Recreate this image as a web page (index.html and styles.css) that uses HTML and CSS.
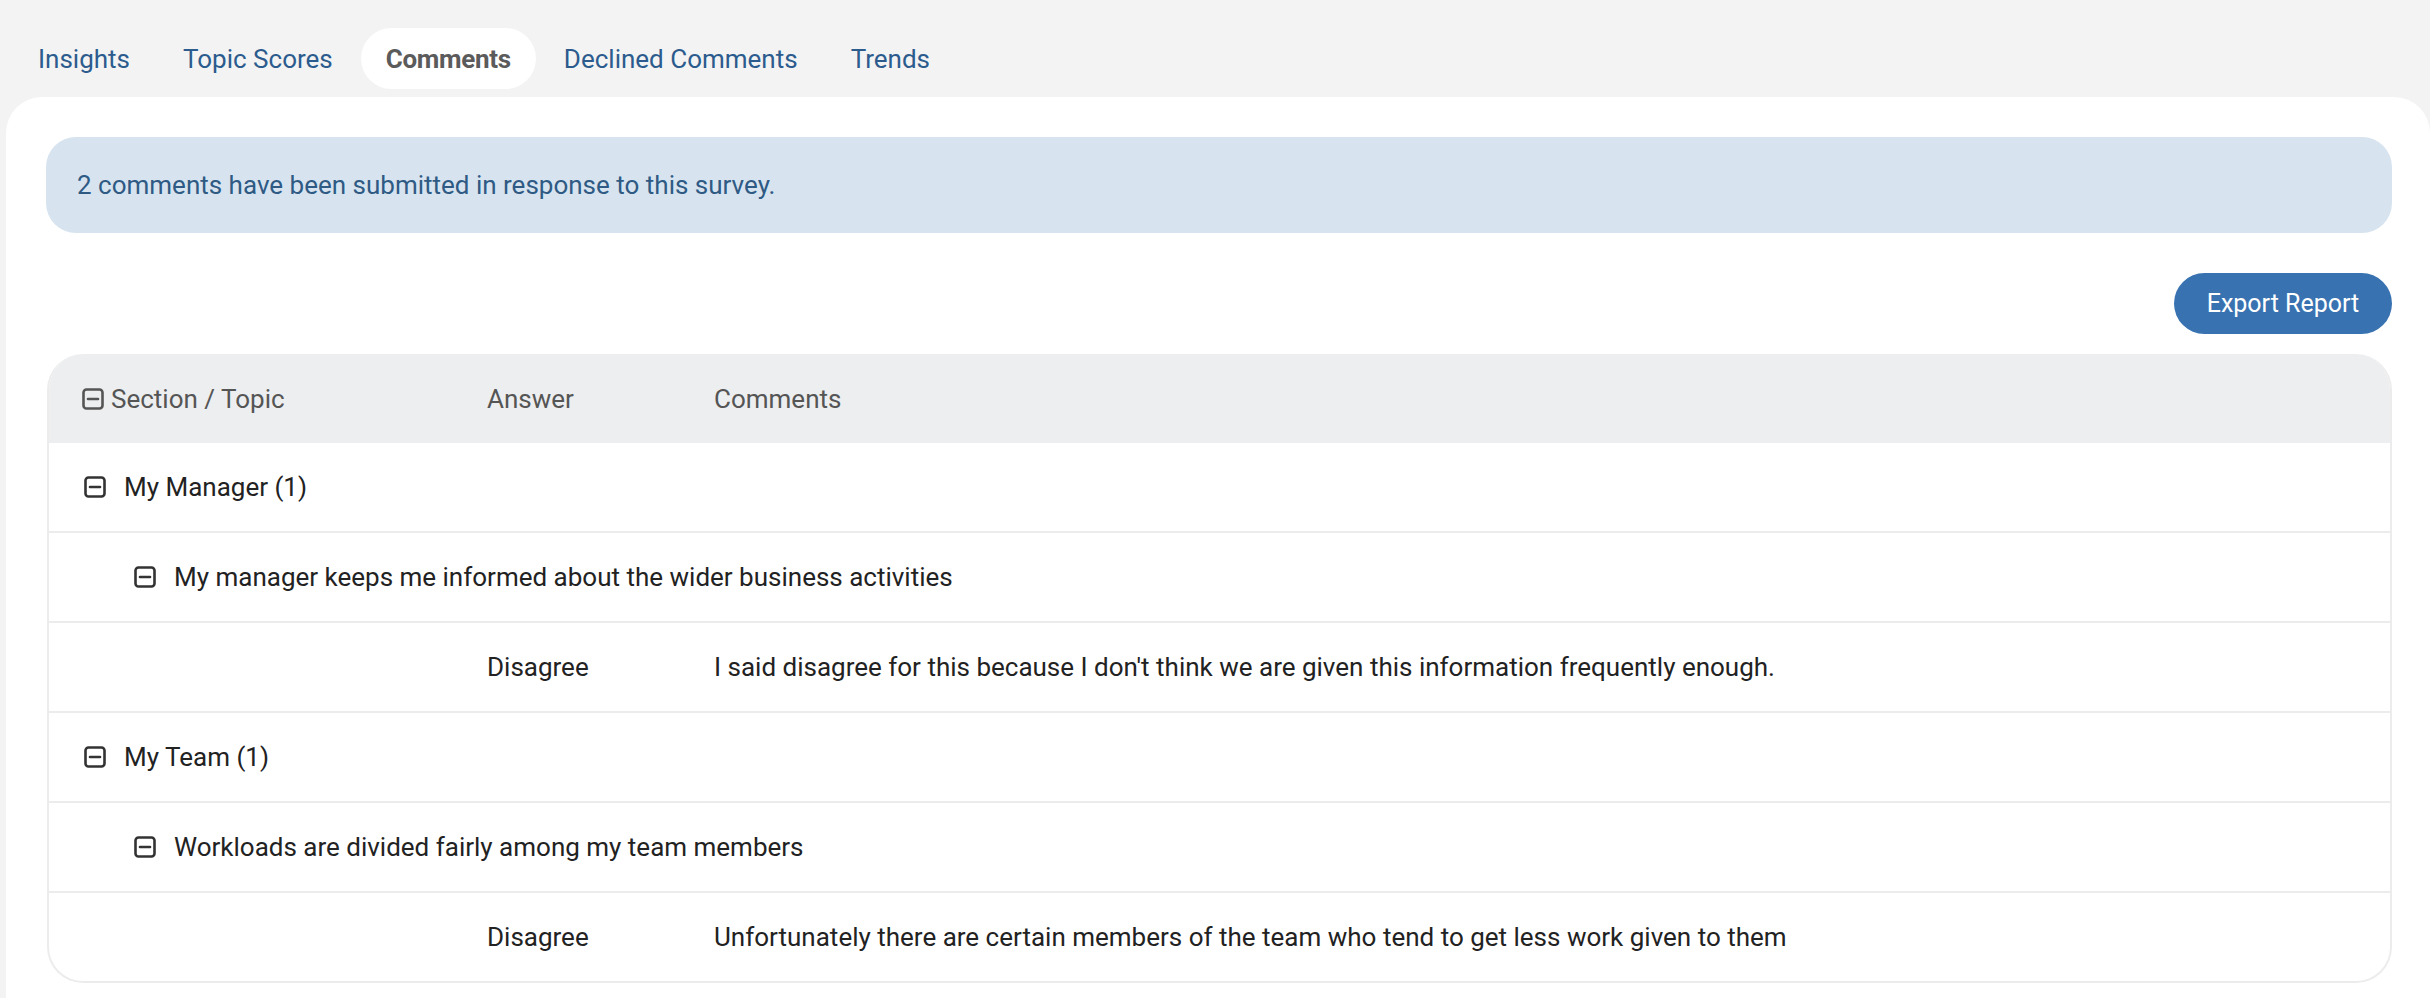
FILE: index.html
```html
<!DOCTYPE html>
<html lang="en">
<head>
<meta charset="utf-8">
<title>Comments</title>
<link rel="stylesheet" href="styles.css">
</head>
<body>
<nav class="tabs">
  <a class="tab">Insights</a>
  <a class="tab">Topic Scores</a>
  <a class="tab active">Comments</a>
  <a class="tab">Declined Comments</a>
  <a class="tab">Trends</a>
</nav>
<main class="card">
  <div class="banner">2 comments have been submitted in response to this survey.</div>
  <div class="actions"><button class="btn">Export Report</button></div>
  <div class="table">
    <div class="row head">
      <div class="cell sec"><svg class="ico" viewBox="0 0 22 22"><rect x="1.5" y="1.5" width="19" height="19" rx="3"/><line x1="6" y1="11" x2="16" y2="11"/></svg><span class="gap-s">Section / Topic</span></div>
      <div class="cell">Answer</div>
      <div class="cell">Comments</div>
    </div>
    <div class="row">
      <div class="cell sec lvl1"><svg class="ico" viewBox="0 0 22 22"><rect x="1.5" y="1.5" width="19" height="19" rx="3"/><line x1="6" y1="11" x2="16" y2="11"/></svg><span>My Manager (1)</span></div>
    </div>
    <div class="row">
      <div class="cell sec lvl2 wide"><svg class="ico" viewBox="0 0 22 22"><rect x="1.5" y="1.5" width="19" height="19" rx="3"/><line x1="6" y1="11" x2="16" y2="11"/></svg><span>My manager keeps me informed about the wider business activities</span></div>
    </div>
    <div class="row">
      <div class="cell"></div>
      <div class="cell">Disagree</div>
      <div class="cell">I said disagree for this because I don't think we are given this information frequently enough.</div>
    </div>
    <div class="row">
      <div class="cell sec lvl1"><svg class="ico" viewBox="0 0 22 22"><rect x="1.5" y="1.5" width="19" height="19" rx="3"/><line x1="6" y1="11" x2="16" y2="11"/></svg><span>My Team (1)</span></div>
    </div>
    <div class="row">
      <div class="cell sec lvl2 wide"><svg class="ico" viewBox="0 0 22 22"><rect x="1.5" y="1.5" width="19" height="19" rx="3"/><line x1="6" y1="11" x2="16" y2="11"/></svg><span>Workloads are divided fairly among my team members</span></div>
    </div>
    <div class="row last">
      <div class="cell"></div>
      <div class="cell">Disagree</div>
      <div class="cell">Unfortunately there are certain members of the team who tend to get less work given to them</div>
    </div>
  </div>
</main>
</body>
</html>
```
FILE: styles.css
```css
* { box-sizing: border-box; }
html, body { margin: 0; padding: 0; }
body {
  background: #f3f3f3;
  font-family: Roboto, "Liberation Sans", Arial, sans-serif;
  font-size: 26px;
  color: #222;
  width: 2430px;
  height: 998px;
  overflow: hidden;
}
.tabs {
  display: flex;
  gap: 3px;
  padding: 28px 0 0 13px;
  height: 89px;
}
.tab {
  display: flex;
  align-items: center;
  height: 61px;
  padding: 0 25px;
  border-radius: 31px;
  color: #2c5b8e;
  font-size: 26px;
  cursor: pointer;
}
.tab.active {
  background: #fff;
  color: #5b5b5b;
  font-weight: 700;
  letter-spacing: -0.3px;
}
.card {
  margin: 8px 0 0 6px;
  background: #fff;
  border-radius: 36px 36px 0 0;
  padding: 40px 38px 17px 40px;
  height: 901px;
}
.banner {
  height: 96px;
  display: flex;
  align-items: center;
  padding-left: 31px;
  background: #d7e4f0;
  color: #2e5a84;
  border-radius: 30px;
  font-size: 26px;
}
.actions {
  display: flex;
  justify-content: flex-end;
  padding: 40px 0 20px;
}
.btn {
  height: 61px;
  width: 218px;
  border: 0;
  border-radius: 31px;
  background: #3872b0;
  color: #fff;
  font-family: Roboto, "Liberation Sans", Arial, sans-serif;
  font-size: 25px;
  padding: 0;
}
.table {
  margin-left: 1px;
  border: 2px solid #ececec;
  border-top: 0;
  border-radius: 36px;
  overflow: hidden;
}
.row {
  display: grid;
  grid-template-columns: 403px 227px 1fr;
  align-items: center;
  height: 90px;
  padding-left: 35px;
  border-bottom: 2px solid #ececec;
}
.row.last { border-bottom: 0; height: 88px; }
.row.head {
  background: #edeef0;
  color: #555;
  height: 89px;
  padding-left: 33px;
  border-bottom: 0;
  grid-template-columns: 405px 227px 1fr;
}
.cell { display: flex; align-items: center; white-space: nowrap; }
.cell.wide { grid-column: 1 / 4; }
.sec .ico { flex: none; }
.sec span { margin-left: 18px; }
.sec .gap-s { margin-left: 7px; }
.lvl2 { padding-left: 50px; }
.ico {
  width: 22px;
  height: 22px;
  fill: none;
  stroke: #333;
  stroke-width: 2.6;
  stroke-linecap: round;
}
.head .ico { stroke: #555; }
```
